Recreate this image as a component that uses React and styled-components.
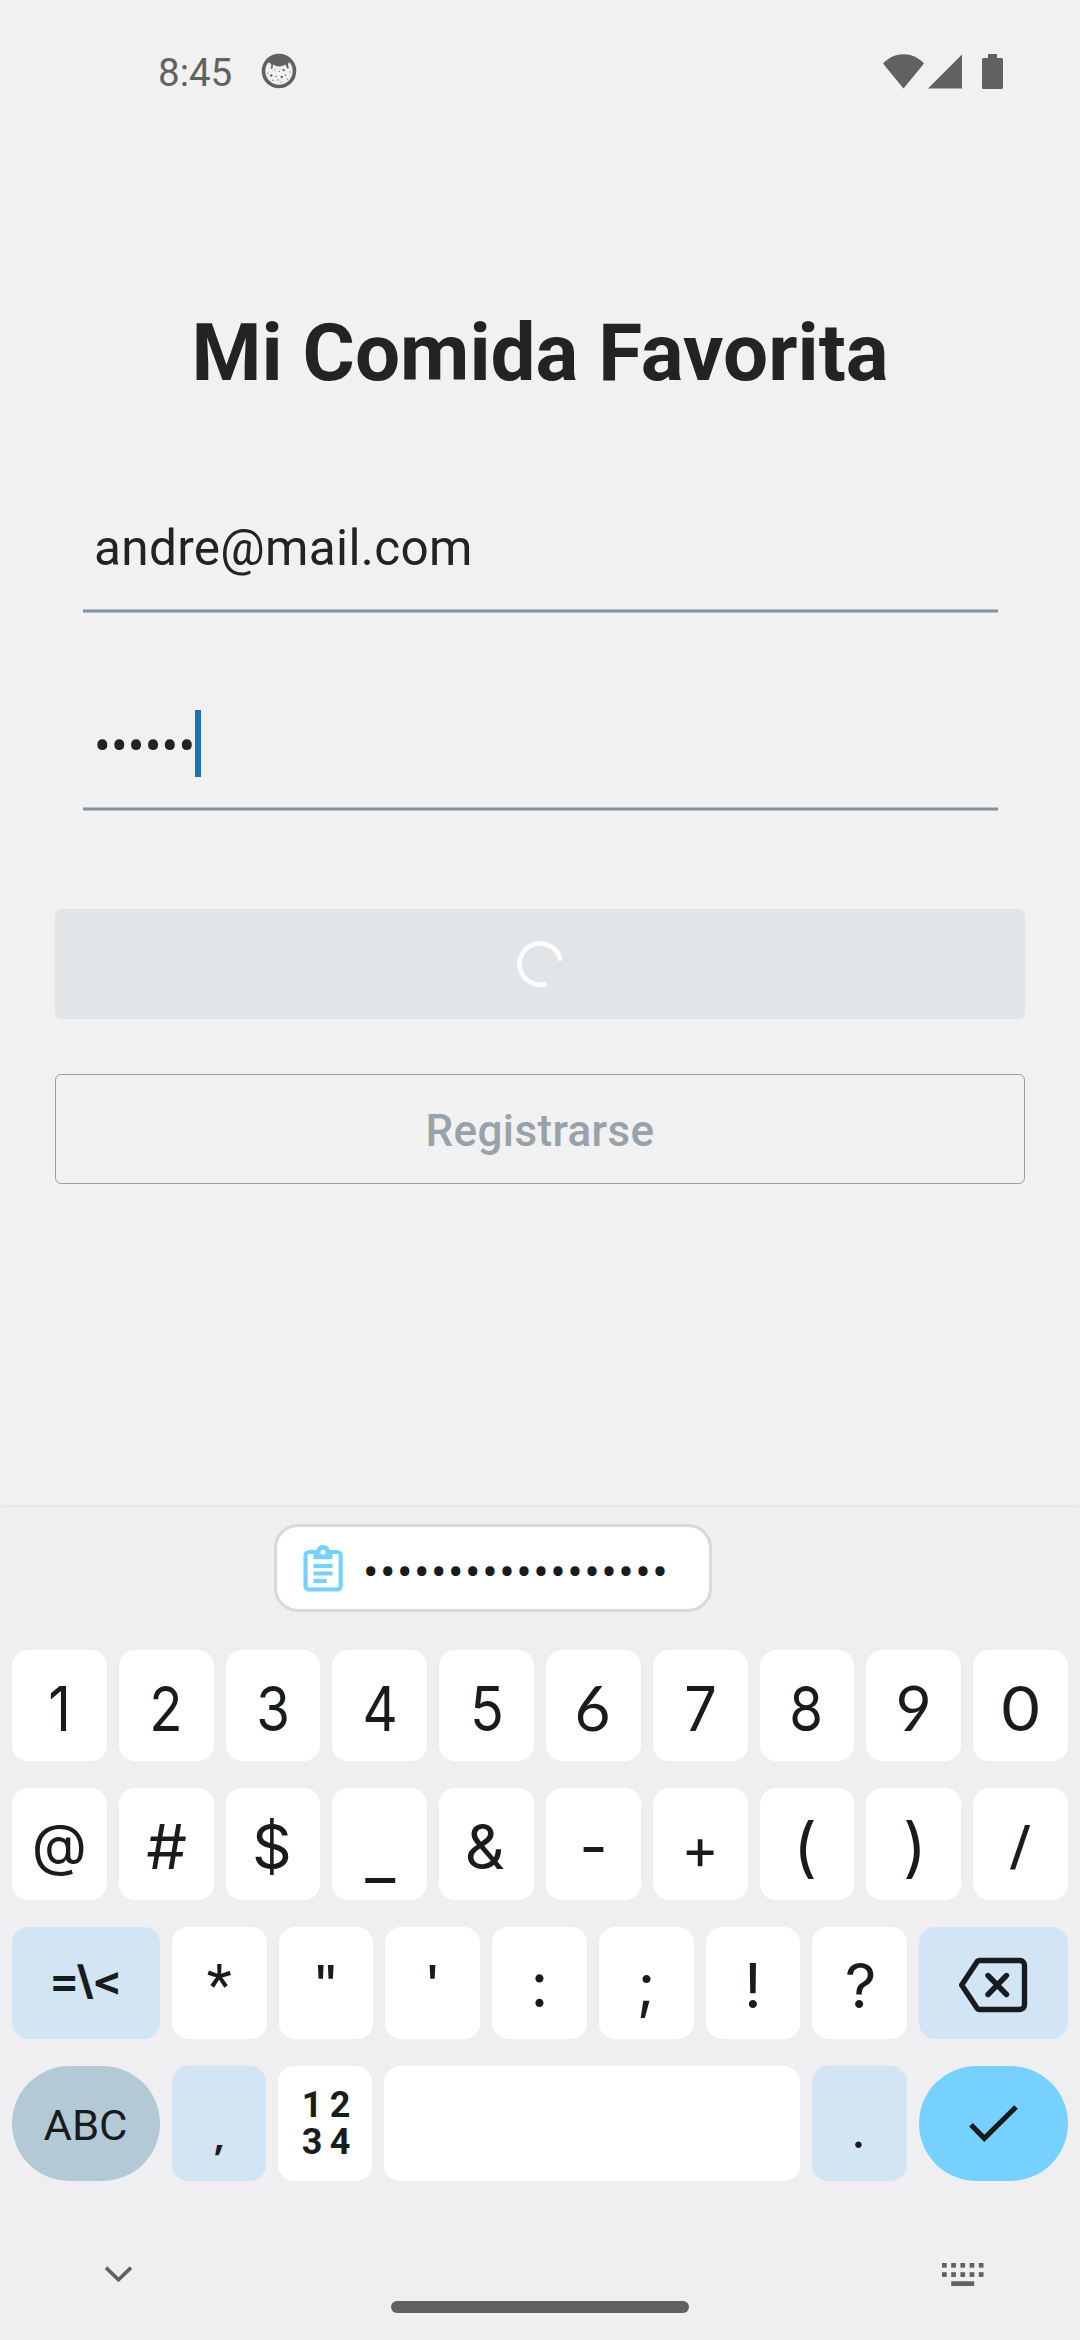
import React from "react";
import styled, { createGlobalStyle, css } from "styled-components";

const GlobalStyle = createGlobalStyle`
  *, *::before, *::after { box-sizing: border-box; }
  html, body { margin: 0; padding: 0; background: #f1f1f1; }
`;

const Screen = styled.div`
  width: 1080px;
  height: 2340px;
  display: flex;
  flex-direction: column;
  background: #f1f1f1;
  font-family: Roboto, "Liberation Sans", sans-serif;
  overflow: hidden;
`;

/* ---------- status bar ---------- */

const StatusBar = styled.header`
  height: 142px;
  flex: none;
  display: flex;
  align-items: center;
  justify-content: space-between;
  padding: 0 77px 0 158px;
  color: #616161;
`;

const StatusGroup = styled.div`
  display: flex;
  align-items: center;
  gap: ${(p) => p.$gap}px;
`;

const Clock = styled.span`
  font-size: 38.5px;
  line-height: 46px;
  padding-top: 3px;
`;

/* ---------- form ---------- */

const Form = styled.main`
  flex: 1;
  display: flex;
  flex-direction: column;
`;

const Title = styled.h1`
  margin: 163px 0 14px;
  height: 96px;
  font-size: 80px;
  line-height: 96px;
  font-weight: 700;
  text-align: center;
  color: #232323;
`;

const Field = styled.div`
  width: 915px;
  height: 198px;
  margin-left: 83px;
  display: flex;
  flex-direction: column;
  justify-content: flex-end;
`;

const FieldRow = styled.div`
  display: flex;
  height: 67px;
  margin-bottom: 30px;
  padding-left: 11px;
`;

const FieldText = styled.span`
  font-size: 49.5px;
  line-height: 72px;
  letter-spacing: ${(p) => p.$spacing || 0}px;
  color: #232323;
`;

const Caret = styled.span`
  width: 6px;
  height: 67px;
  background: #1b71b5;
`;

const Underline = styled.div`
  height: 4px;
  background: #84919e;
  border-top: 1px solid #b9c1c8;
  border-bottom: 1px solid #b9c1c8;
`;

const Actions = styled.div`
  margin: 98px 55px 0;
  display: flex;
  flex-direction: column;
  gap: 55px;
`;

const Button = styled.button`
  height: 110px;
  padding: 0;
  display: flex;
  align-items: center;
  justify-content: center;
  border-radius: 6px;
  font-family: inherit;
  font-size: 44px;
  line-height: 56px;
  font-weight: 500;
  color: #98a2aa;
  ${(p) =>
    p.$outlined
      ? css`
          background: transparent;
          border: 1px solid #97a1a9;
        `
      : css`
          background: #e1e5e8;
          border: none;
        `}
`;

const ButtonLabel = styled.span`
  padding-top: 4px;
  letter-spacing: 0.35px;
`;

/* ---------- keyboard ---------- */

const Keyboard = styled.section`
  height: 833px;
  flex: none;
  display: flex;
  flex-direction: column;
  background: #efeff1;
  color: #191c1e;
  box-shadow: 0 -1px 5px rgba(0, 0, 0, 0.08);
`;

const SuggestionStrip = styled.div`
  height: 143px;
  flex: none;
  padding: 17px 0 0 274px;
`;

const ClipChip = styled.div`
  width: 438px;
  height: 88px;
  display: flex;
  align-items: center;
  gap: 20px;
  padding-left: 26px;
  background: #fff;
  border: 3px solid #d8d9db;
  border-radius: 24px;
`;

const ClipText = styled.span`
  font-size: 46px;
  line-height: 60px;
  letter-spacing: ${(p) => p.$spacing}px;
  padding-top: 7px;
`;

const Rows = styled.div`
  display: flex;
  flex-direction: column;
  gap: 27px;
  padding: 0 12px;
`;

const Row = styled.div`
  height: ${(p) => p.$height || 112}px;
  display: grid;
  grid-template-columns: ${(p) => p.$columns || "repeat(10, 1fr)"};
  gap: 12px;
`;

const KEY_COLORS = {
  plain: "#ffffff",
  soft: "#d2e5f4",
  muted: "#b4c9d6",
  accent: "#77d1ff",
};

const Key = styled.div`
  display: flex;
  align-items: center;
  justify-content: center;
  border-radius: ${(p) => (p.$pill ? 58 : 16)}px;
  background: ${(p) => KEY_COLORS[p.$tone || "plain"]};
  overflow: hidden;
`;

const Glyph = styled.span`
  font-family: ${(p) => p.$font || "Inter"}, Roboto, sans-serif;
  font-size: ${(p) => p.$size || 62}px;
  font-weight: ${(p) => p.$weight || 400};
  line-height: 80px;
  transform: translate(${(p) => p.$dx || 0}px, ${(p) => p.$dy ?? 3}px)
    scaleX(${(p) => p.$stretch || 1});
`;

const DigitGrid = styled.div`
  display: grid;
  grid-template-columns: 26px 26px;
  grid-auto-rows: 37px;
  column-gap: 2px;
  padding-left: 2px;
  justify-items: center;
  font-size: 36px;
  line-height: 37px;
  font-weight: 700;
`;

const NavBar = styled.footer`
  flex: 1;
  display: flex;
  align-items: flex-start;
  justify-content: space-between;
  padding: 82px 95px 0 104px;
  color: #616161;
`;

const NavSlot = styled.div`
  display: flex;
  padding-top: ${(p) => p.$top || 0}px;
`;

const HomePill = styled.div`
  width: 298px;
  height: 12px;
  margin: 38px 0 0 4px;
  border-radius: 6px;
  background: #616161;
`;

/* ---------- icons ---------- */

const AppIcon = () => (
  <svg width="36" height="36" viewBox="0 0 36 36">
    <circle cx="18" cy="18" r="15.5" fill="none" stroke="currentColor" strokeWidth="3.6" />
    <path d="M6 10 Q18 -3 30 10 L27.5 9.5 L27 12.5 L28 15 L26.2 15.6 L24.5 11.6 Q18 15.5 12 11.6 L11.5 15.6 L9.6 15.8 L10.5 12 L8.6 9.5 Z" fill="currentColor" />
    <g fill="currentColor">
      <circle cx="10.3" cy="22.5" r="1.2" />
      <circle cx="22.6" cy="17.2" r="1.1" />
      <circle cx="20.7" cy="24" r="1.2" />
      <circle cx="14" cy="17" r=".6" />
      <circle cx="18.3" cy="18.4" r=".6" />
      <circle cx="15" cy="23.4" r=".7" />
      <circle cx="24.5" cy="22.3" r=".7" />
      <circle cx="12" cy="27.2" r=".7" />
      <circle cx="17" cy="27" r=".7" />
      <circle cx="20" cy="29" r=".6" />
      <circle cx="7" cy="20" r=".6" />
      <circle cx="29" cy="19" r=".6" />
      <circle cx="26.5" cy="26" r=".6" />
    </g>
  </svg>
);

const WifiIcon = () => (
  <svg width="41" height="35" viewBox="0 0 41 35">
    <path d="M0 9.4 C11.5 -2.8 29.5 -2.8 41 9.4 L20.5 34.5 Z" fill="currentColor" />
  </svg>
);

const SignalIcon = () => (
  <svg width="34" height="35" viewBox="0 0 34 35">
    <path d="M0 34.5 L34 0.5 V34.5 Z" fill="currentColor" />
  </svg>
);

const BatteryIcon = () => (
  <svg width="21" height="35" viewBox="0 0 21 35">
    <path d="M6 0h9v4h4.5a1.5 1.5 0 0 1 1.5 1.5v28a1.5 1.5 0 0 1-1.5 1.5h-18a1.5 1.5 0 0 1-1.5-1.5v-28a1.5 1.5 0 0 1 1.5-1.5h4.5z" fill="currentColor" />
  </svg>
);

const Spinner = () => (
  <svg width="48" height="48" viewBox="0 0 48 48">
    <path d="M44.62 20.6 A20.7 20.7 0 1 0 30.5 43.8" fill="none" stroke="#fff" strokeWidth="4.6" />
  </svg>
);

const ClipboardIcon = () => (
  <svg width="40" height="47" viewBox="0 0 40 47" fill="none">
    <rect x="2.5" y="7" width="35.2" height="37.5" rx="3.5" stroke="#77d1ff" strokeWidth="4.2" />
    <path d="M10.5 5H13.3A7 7 0 0 1 26.7 5H29.5V14.3H10.5Z" fill="#77d1ff" />
    <circle cx="20" cy="7.2" r="2.5" fill="#fff" />
    <path d="M10.5 21H29.5M10.5 28.5H29.5M10.5 35.8H23.8" stroke="#77d1ff" strokeWidth="4.2" />
  </svg>
);

const BackspaceIcon = () => (
  <svg width="72" height="60" viewBox="0 -4 72 60" fill="none" stroke="currentColor" strokeWidth="5.4">
    <path d="M22 3.5H62a4.5 4.5 0 0 1 4.5 4.5V48a4.5 4.5 0 0 1-4.5 4.5H22a4 4 0 0 1-3.4-1.9L3.7 28L18.6 5.4A4 4 0 0 1 22 3.5Z" strokeLinejoin="round" />
    <path d="M30 18.5L48.5 37.5M48.5 18.5L30 37.5" strokeLinecap="round" />
  </svg>
);

const CheckIcon = () => (
  <svg width="49" height="38" viewBox="0 0 49 38" fill="none">
    <path d="M2 19.8L15.3 33.3L47 2" stroke="currentColor" strokeWidth="5.2" />
  </svg>
);

const ChevronDownIcon = () => (
  <svg width="29" height="18" viewBox="0 0 29 18" fill="none">
    <path d="M2 2.6L14.5 14.8L27 2.6" stroke="currentColor" strokeWidth="3.6" />
  </svg>
);

const KeyboardIcon = () => (
  <svg width="43" height="23" viewBox="0 0 43 23" fill="currentColor">
    {[0, 9.2].map((y) =>
      [0, 9.2, 18.4, 27.6, 36.8].map((x) => (
        <rect key={`${x}-${y}`} x={x} y={y} width="4.7" height="4.7" />
      ))
    )}
    <rect x="9.2" y="18.3" width="23" height="4.7" />
  </svg>
);

/* ---------- data ---------- */

const ROW_DIGITS = [
  { ch: "1", stretch: 0.9 },
  { ch: "2", stretch: 0.88 },
  { ch: "3", stretch: 0.88 },
  { ch: "4", stretch: 0.88 },
  { ch: "5", stretch: 0.9 },
  { ch: "6", font: "Lato", dx: -1, dy: 1 },
  { ch: "7", stretch: 0.93 },
  { ch: "8", stretch: 0.88, dx: -1 },
  { ch: "9", font: "Lato", dy: 1 },
  { ch: "0", stretch: 1.08 },
];

const ROW_SYMBOLS = [
  { ch: "@", size: 57, dy: 1 },
  { ch: "#", stretch: 1.04 },
  { ch: "$", dx: -1 },
  { ch: "_", dy: 12, stretch: 1.06 },
  { ch: "&", dx: -2 },
  { ch: "-" },
  { ch: "+", size: 57, dy: 5 },
  { ch: "(", size: 65, dx: -2 },
  { ch: ")", size: 65, dx: 1 },
  { ch: "/", size: 51, dy: 2, stretch: 1.26 },
];

const ROW_PUNCT = [
  { ch: "*", font: "Roboto", size: 58, dy: 2 },
  { ch: '"', size: 50, dy: 1, stretch: 1.2 },
  { ch: "'", size: 50, dy: 1, stretch: 1.2 },
  { ch: ":", dy: 2 },
  { ch: ";", dy: 2 },
  { ch: "!" },
  { ch: "?", dx: 1 },
];

const CharKey = ({ ch, font, size, dx, dy, stretch, weight, tone }) => (
  <Key $tone={tone}>
    <Glyph $font={font} $size={size} $dx={dx} $dy={dy} $stretch={stretch} $weight={weight}>
      {ch}
    </Glyph>
  </Key>
);

const WIDE_ROW = "148px repeat(7, 1fr) 149px";
const BOTTOM_ROW = "148px 94px 94px 416px 95px 149px";

export default function App() {
  return (
    <Screen>
      <GlobalStyle />
      <StatusBar>
        <StatusGroup $gap={29}>
          <Clock>8:45</Clock>
          <AppIcon />
        </StatusGroup>
        <StatusGroup $gap={20}>
          <StatusGroup $gap={4}>
            <WifiIcon />
            <SignalIcon />
          </StatusGroup>
          <BatteryIcon />
        </StatusGroup>
      </StatusBar>

      <Form>
        <Title>Mi Comida Favorita</Title>
        <Field>
          <FieldRow>
            <FieldText $spacing={0.32}>andre@mail.com</FieldText>
          </FieldRow>
          <Underline />
        </Field>
        <Field>
          <FieldRow>
            <FieldText $spacing={0.2}>••••••</FieldText>
            <Caret />
          </FieldRow>
          <Underline />
        </Field>
        <Actions>
          <Button>
            <Spinner />
          </Button>
          <Button $outlined>
            <ButtonLabel>Registrarse</ButtonLabel>
          </Button>
        </Actions>
      </Form>

      <Keyboard>
        <SuggestionStrip>
          <ClipChip>
            <ClipboardIcon />
            <ClipText $spacing={1.5}>••••••••••••••••••</ClipText>
          </ClipChip>
        </SuggestionStrip>
        <Rows>
          <Row $height={111}>
            {ROW_DIGITS.map((k) => (
              <CharKey key={k.ch} {...k} />
            ))}
          </Row>
          <Row>
            {ROW_SYMBOLS.map((k) => (
              <CharKey key={k.ch} {...k} />
            ))}
          </Row>
          <Row $columns={WIDE_ROW}>
            <Key $tone="soft">
              <Glyph $size={40} $weight={700} $dy={-2} $stretch={1.12}>=\&lt;</Glyph>
            </Key>
            {ROW_PUNCT.map((k) => (
              <CharKey key={k.ch} {...k} />
            ))}
            <Key $tone="soft">
              <BackspaceIcon />
            </Key>
          </Row>
          <Row $height={115} $columns={BOTTOM_ROW}>
            <Key $tone="muted" $pill>
              <Glyph $size={42} $font="Roboto" $dx={-1} $dy={2} $stretch={1.04}>ABC</Glyph>
            </Key>
            <CharKey ch="," tone="soft" size={36} weight={500} dy={12} stretch={1.3} />
            <Key>
              <DigitGrid>
                <span>1</span>
                <span>2</span>
                <span>3</span>
                <span>4</span>
              </DigitGrid>
            </Key>
            <Key />
            <CharKey ch="." tone="soft" size={50} dx={-1} dy={6} />
            <Key $tone="accent" $pill>
              <CheckIcon />
            </Key>
          </Row>
        </Rows>
        <NavBar>
          <NavSlot $top={2}>
            <ChevronDownIcon />
          </NavSlot>
          <HomePill />
          <NavSlot>
            <KeyboardIcon />
          </NavSlot>
        </NavBar>
      </Keyboard>
    </Screen>
  );
}
